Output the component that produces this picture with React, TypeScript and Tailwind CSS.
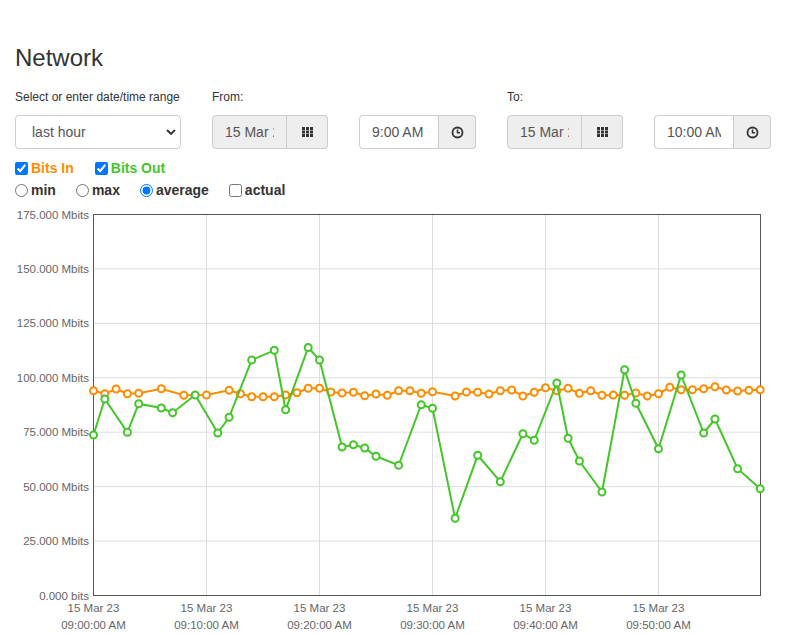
import React from "react";

const FONT = { fontFamily: '"Liberation Sans", Arial, sans-serif' };

// [minute index, y in page px]
const bitsIn: [number, number][] = [
  [0, 389.7], [1, 392.7], [2, 388], [3, 392.7], [4, 392.3], [6, 387.7], [8, 394.3],
  [10, 394], [12, 389.3], [13, 392.7], [14, 395.7], [15, 395.7], [16, 395.7], [17, 394],
  [18, 391.7], [19, 387.3], [20, 387.3], [21, 391], [22, 392], [23, 391.3], [24, 394.7],
  [25, 393], [26, 394.3], [27, 389.7], [28, 389.7], [29, 392.3], [30, 390.7], [32, 395],
  [33, 391], [34, 391.3], [35, 393], [36, 389.7], [37, 389], [38, 395], [39, 391.3],
  [40, 386.7], [41, 389.7], [42, 387.3], [43, 392.3], [44, 389.7], [45, 394.3], [46, 394],
  [47, 394.3], [48, 392], [49, 395], [50, 392.7], [51, 386.3], [52, 388.7], [53, 388.7],
  [54, 387.7], [55, 385.7], [56, 389], [57, 390], [58, 389.3], [59, 388.7],
];

const bitsOut: [number, number][] = [
  [0, 434], [1, 398], [3, 431.3], [4, 402.7], [6, 407], [7, 411.7], [9, 394], [11, 432],
  [12, 416.3], [14, 359], [16, 349.3], [17, 408.7], [19, 346.5], [20, 359], [22, 446],
  [23, 443.7], [24, 447], [25, 455.3], [27, 464.3], [29, 403.7], [30, 407.3], [32, 517.3],
  [34, 454.3], [36, 480.7], [38, 432.7], [39, 439.3], [41, 382], [42, 437.3], [43, 460],
  [45, 491], [47, 368.7], [48, 402.3], [50, 447.7], [52, 374], [54, 432], [55, 418],
  [57, 467.7], [59, 487.7],
];

const X0 = 93.5;
const STEP = 11.3;
const px = (i: number) => X0 + i * STEP;

const yTicks = [
  "0.000 bits",
  "25.000 Mbits",
  "50.000 Mbits",
  "75.000 Mbits",
  "100.000 Mbits",
  "125.000 Mbits",
  "150.000 Mbits",
  "175.000 Mbits",
];

const xTicks = ["09:00:00 AM", "09:10:00 AM", "09:20:00 AM", "09:30:00 AM", "09:40:00 AM", "09:50:00 AM"];

function GridIcon() {
  return (
    <svg width="11" height="10" viewBox="0 0 11 10" fill="#333">
      {[0, 4, 8].map((x) =>
        [0, 3.5, 7].map((y) => <rect key={`${x}-${y}`} x={x} y={y} width="3" height="3" />)
      )}
    </svg>
  );
}

function ClockIcon() {
  return (
    <svg width="13" height="13" viewBox="0 0 13 13" fill="none" stroke="#333">
      <circle cx="6.5" cy="6.5" r="5" strokeWidth="1.8" />
      <path d="M6.5 3.5V6.8H9" strokeWidth="1.5" />
    </svg>
  );
}

function DateGroup() {
  return (
    <div className="flex h-[34px] w-[116px]">
      <input
        readOnly
        value="15 Mar 2023"
        className="h-full w-[75px] rounded-l-[4px] border border-[#ccc] bg-[#eee] px-3 text-[14px] text-[#555] outline-none"
        style={FONT}
      />
      <span className="flex h-full w-[41px] items-center justify-center rounded-r-[4px] border border-l-0 border-[#ccc] bg-[#eee]">
        <GridIcon />
      </span>
    </div>
  );
}

function TimeGroup({ value }: { value: string }) {
  return (
    <div className="flex h-[34px] w-[117px]">
      <input
        readOnly
        value={value}
        className="h-full w-[80px] rounded-l-[4px] border border-[#ccc] bg-white px-3 text-[14px] text-[#555] outline-none"
        style={FONT}
      />
      <span className="flex h-full w-[37px] items-center justify-center rounded-r-[4px] border border-l-0 border-[#ccc] bg-[#eee]">
        <ClockIcon />
      </span>
    </div>
  );
}

function Chart() {
  const top = 213.5;
  const bottom = 594.5;
  const right = 760.5;
  const gy = (k: number) => bottom - (k * (bottom - top)) / 7;
  const line = (pts: [number, number][]) => pts.map(([i, y]) => `${px(i)},${y}`).join(" ");

  return (
    <svg width="787" height="434" viewBox="0 200 787 434" className="block" style={FONT}>
      {yTicks.map((_, k) => (
        <line key={k} x1={X0} x2={right} y1={gy(k)} y2={gy(k)} stroke="#ddd" strokeWidth="1" />
      ))}
      {xTicks.map((_, k) => (
        <line key={k} x1={px(k * 10)} x2={px(k * 10)} y1={top} y2={bottom} stroke="#ddd" strokeWidth="1" />
      ))}
      <rect x={X0} y={top} width={right - X0} height={bottom - top} fill="none" stroke="#555" strokeWidth="1" />

      {yTicks.map((t, k) => (
        <text key={t} x="89" y={gy(k) + 4} textAnchor="end" fontSize="11.5" fill="#666">
          {t}
        </text>
      ))}
      {xTicks.map((t, k) => (
        <g key={t}>
          <text x={px(k * 10)} y="611" textAnchor="middle" fontSize="11.5" fill="#666">
            15 Mar 23
          </text>
          <text x={px(k * 10)} y="628" textAnchor="middle" fontSize="11.5" fill="#666">
            {t}
          </text>
        </g>
      ))}

      <polyline points={line(bitsIn)} fill="none" stroke="#ff8c00" strokeWidth="2" />
      {bitsIn.map(([i, y]) => (
        <circle key={`in-${i}`} cx={px(i)} cy={y} r="3.5" fill="#fff" stroke="#ff8c00" strokeWidth="2" />
      ))}
      <polyline points={line(bitsOut)} fill="none" stroke="#44c62a" strokeWidth="2" />
      {bitsOut.map(([i, y]) => (
        <circle key={`out-${i}`} cx={px(i)} cy={y} r="3.5" fill="#fff" stroke="#44c62a" strokeWidth="2" />
      ))}
    </svg>
  );
}

export default function App() {
  return (
    <div className="min-h-[634px] bg-white pt-[45px] text-[#333]" style={FONT}>
      <h3 className="pl-[15px] text-[24px] leading-[26.4px]">Network</h3>

      <div className="mt-[18px] flex gap-[31px] pl-[15px]">
        <div className="flex flex-col">
          <label className="text-[12px] leading-[17px]">Select or enter date/time range</label>
          <div className="relative mt-[9px] h-[34px] w-[166px]">
            <select
              defaultValue="hour"
              className="h-full w-full appearance-none rounded-[4px] border border-[#ccc] bg-white pl-[16px] text-[14px] text-[#555] outline-none"
              style={FONT}
            >
              <option value="hour">last hour</option>
            </select>
            <svg
              className="pointer-events-none absolute right-[5px] top-[13px]"
              width="10"
              height="8"
              viewBox="0 0 10 8"
              fill="none"
              stroke="#333"
              strokeWidth="1.8"
            >
              <path d="M1 2l4 4 4-4" />
            </svg>
          </div>
        </div>

        <div className="flex flex-col">
          <label className="text-[12px] leading-[17px]">From:</label>
          <div className="mt-[9px] flex gap-[31px]">
            <DateGroup />
            <TimeGroup value="9:00 AM" />
          </div>
        </div>

        <div className="flex flex-col">
          <label className="text-[12px] leading-[17px]">To:</label>
          <div className="mt-[9px] flex gap-[31px]">
            <DateGroup />
            <TimeGroup value="10:00 AM" />
          </div>
        </div>
      </div>

      <div className="mt-[8px] flex h-[22px] items-center gap-[21px] pl-[15px] text-[14px] font-bold">
        <label className="flex items-center gap-[3px] text-[#ff8c00]">
          <input type="checkbox" defaultChecked className="m-0 h-[13px] w-[13px]" />
          Bits In
        </label>
        <label className="flex items-center gap-[3px] text-[#44c62a]">
          <input type="checkbox" defaultChecked className="m-0 h-[13px] w-[13px]" />
          Bits Out
        </label>
      </div>

      <div className="flex h-[22px] items-center gap-[20px] pl-[15px] text-[14px] font-bold">
        <label className="flex items-center gap-[3px]">
          <input type="radio" name="agg" className="m-0 h-[13px] w-[13px]" />
          min
        </label>
        <label className="flex items-center gap-[3px]">
          <input type="radio" name="agg" className="m-0 h-[13px] w-[13px]" />
          max
        </label>
        <label className="flex items-center gap-[3px]">
          <input type="radio" name="agg" defaultChecked className="m-0 h-[13px] w-[13px]" />
          average
        </label>
        <label className="flex items-center gap-[3px]">
          <input type="checkbox" className="m-0 h-[13px] w-[13px]" />
          actual
        </label>
      </div>

      <Chart />
    </div>
  );
}
